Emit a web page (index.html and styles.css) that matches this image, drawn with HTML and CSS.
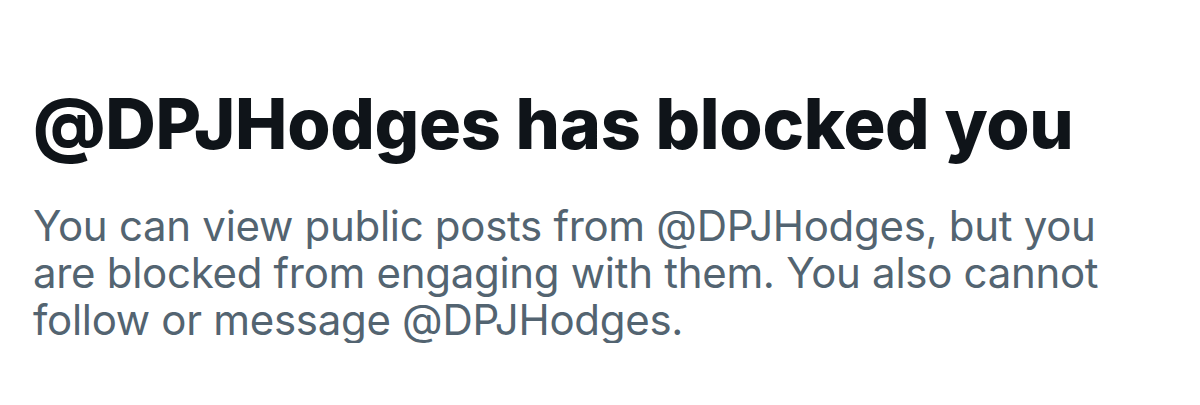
FILE: index.html
```html
<!DOCTYPE html>
<html>
<head>
    <title>Blocked</title>
    <link rel="stylesheet" href="styles.css">
</head>
<body>
<div class="blocked">
    <h1>@DPJHodges has blocked you</h1>
    <p>You can view public posts from @DPJHodges, but you are blocked from engaging with them. You also cannot follow or message @DPJHodges.</p>
</div>
</body>
</html>
```

FILE: styles.css
```css
* {
    margin: 0;
    padding: 0;
    box-sizing: border-box;
}

body {
    background: #ffffff;
    font-family: 'Inter', 'Roboto', sans-serif;
}

.blocked {
    padding: 84px 0 0 33px;
    width: 1148px;
}

h1 {
    font-size: 70px;
    font-weight: 800;
    color: #0f1419;
    line-height: 80px;
    letter-spacing: -0.3px;
    margin-bottom: 38px;
}

p {
    font-size: 42px;
    font-weight: 400;
    color: #536471;
    line-height: 47px;
    letter-spacing: -0.3px;
}
```
